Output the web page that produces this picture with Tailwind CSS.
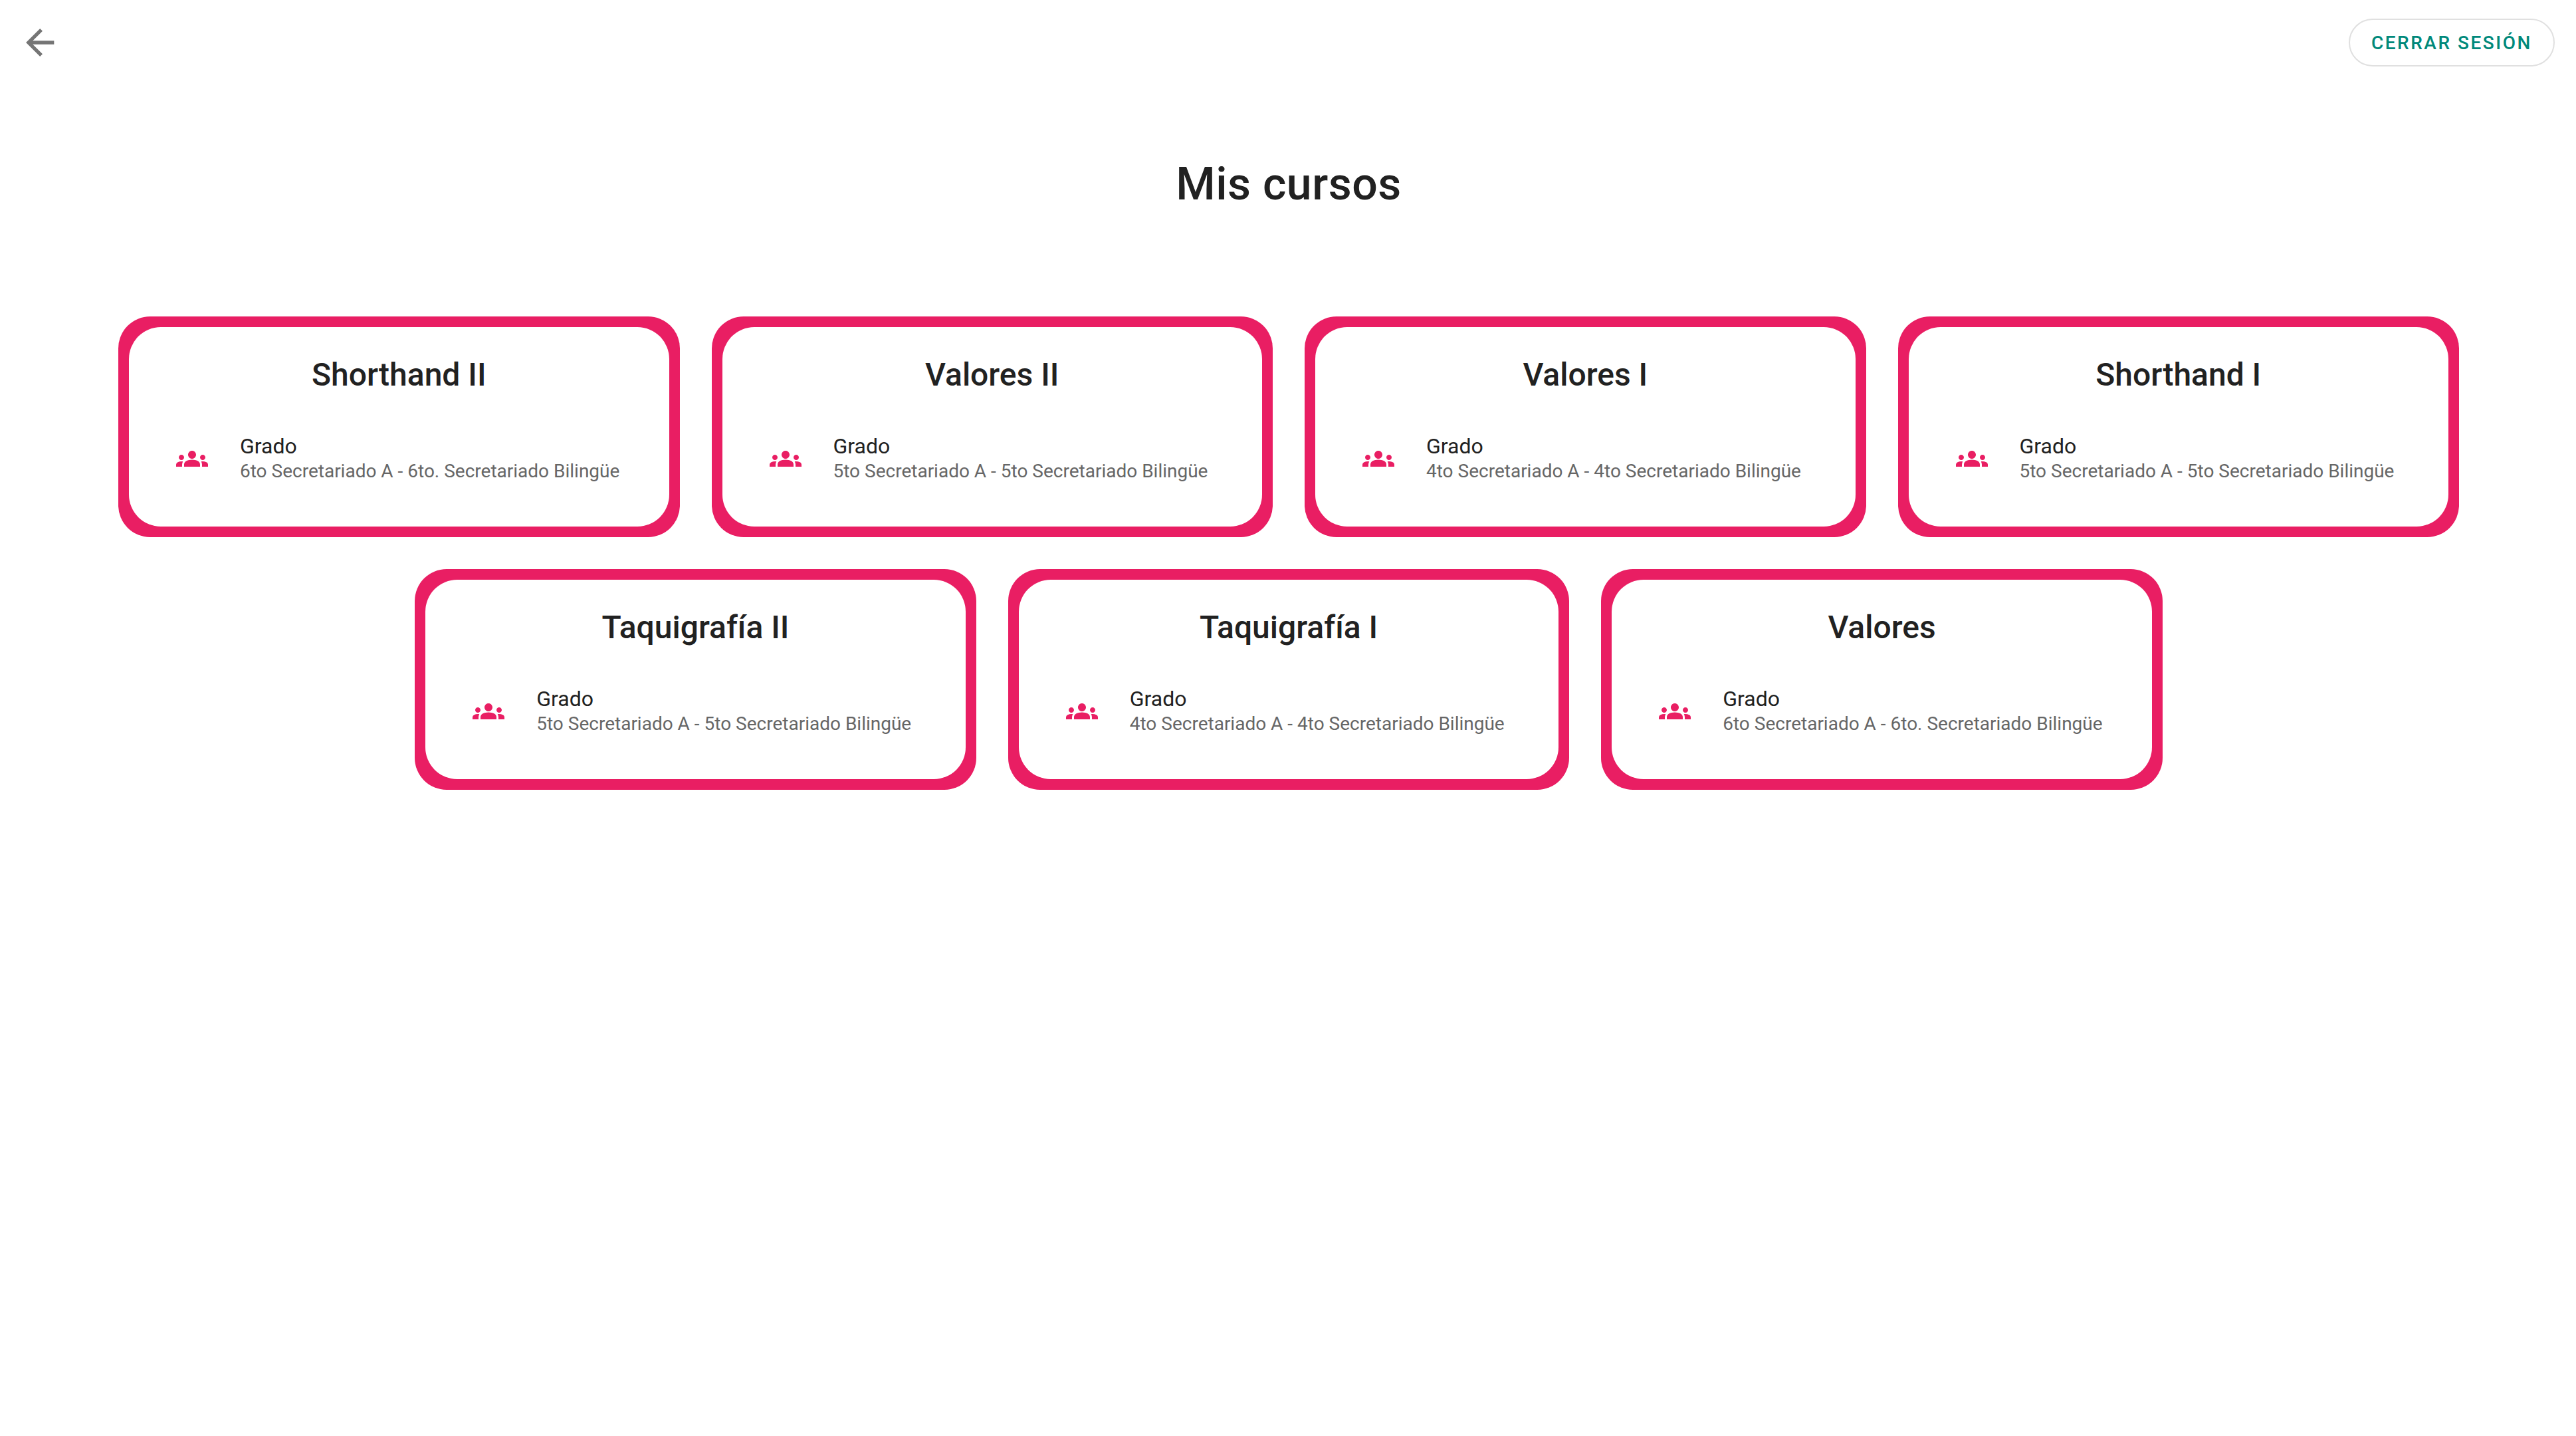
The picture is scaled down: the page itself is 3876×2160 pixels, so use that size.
<!DOCTYPE html>
<html lang="es">
<head>
<meta charset="utf-8">
<meta name="viewport" content="width=device-width, initial-scale=1">
<title>Mis cursos</title>
<script src="https://cdn.jsdelivr.net/npm/@tailwindcss/browser@4"></script>
</head>
<body class="min-h-screen bg-white font-['Roboto',sans-serif] text-[#212121]">
<svg class="hidden" aria-hidden="true">
  <symbol id="groups" viewBox="0 0 24 24">
    <path d="M12 12.75c1.63 0 3.07.39 4.24.9 1.08.48 1.76 1.56 1.76 2.73V18H6v-1.61c0-1.18.68-2.26 1.76-2.73 1.17-.52 2.61-.91 4.24-.91zM4 13c1.1 0 2-.9 2-2s-.9-2-2-2-2 .9-2 2 .9 2 2 2zm1.13 1.1c-.37-.06-.74-.1-1.13-.1-.99 0-1.93.21-2.78.58A2.01 2.01 0 0 0 0 16.43V18h4.500v-1.610c0-.83.23-1.610.63-2.290zM20 13c1.1 0 2-.9 2-2s-.9-2-2-2-2 .9-2 2 .9 2 2 2zm4 3.430c0-.81-.48-1.530-1.220-1.850A6.950 6.950 0 0 0 20 14c-.39 0-.76.04-1.130.1.4.68.63 1.460.63 2.290V18H24v-1.570zM12 6c1.660 0 3 1.340 3 3s-1.340 3-3 3-3-1.340-3-3 1.340-3 3-3z"/>
  </symbol>
</svg>

<header class="flex h-32 items-center justify-between pl-7 pr-8">
  <button type="button" aria-label="Volver" class="text-[#757575]">
    <svg class="size-16" viewBox="0 0 24 24" fill="currentColor"><path d="M20,11V13H8L13.5,18.5L12.08,19.92L4.16,12L12.08,4.08L13.5,5.5L8,11H20Z"/></svg>
  </button>
  <button type="button" class="h-[72px] rounded-full border-2 border-[#e0e0e0] px-8 pt-0.5 text-[28px] leading-8 font-medium tracking-[0.09em] text-[#00897b] uppercase">Cerrar sesión</button>
</header>

<main class="mx-auto max-w-[3600px] pt-[109px] pr-3.5 pl-4">
  <h1 class="text-center text-[68px] leading-[80px] font-medium tracking-[0.0073em]">Mis cursos</h1>

  <ul class="mt-[135px] flex flex-wrap justify-center">
    <li class="w-full p-6 md:w-1/2 xl:w-1/4">
      <a href="#" class="block rounded-[48px] bg-[#e91e63] p-4">
        <article class="rounded-[48px] bg-white pt-10 pb-16">
          <h2 class="text-center text-5xl leading-[64px] font-medium">Shorthand II</h2>
          <div class="mt-14 flex items-center gap-12 px-[71px]">
            <svg class="size-12 shrink-0 fill-[#e91e63]" aria-hidden="true"><use href="#groups"/></svg>
            <div>
              <p class="text-[32px] leading-[38px]">Grado</p>
              <p class="text-[28px] leading-[38px] text-[#666666]">6to Secretariado A - 6to. Secretariado Bilingüe</p>
            </div>
          </div>
        </article>
      </a>
    </li>
    <li class="w-full p-6 md:w-1/2 xl:w-1/4">
      <a href="#" class="block rounded-[48px] bg-[#e91e63] p-4">
        <article class="rounded-[48px] bg-white pt-10 pb-16">
          <h2 class="text-center text-5xl leading-[64px] font-medium">Valores II</h2>
          <div class="mt-14 flex items-center gap-12 px-[71px]">
            <svg class="size-12 shrink-0 fill-[#e91e63]" aria-hidden="true"><use href="#groups"/></svg>
            <div>
              <p class="text-[32px] leading-[38px]">Grado</p>
              <p class="text-[28px] leading-[38px] text-[#666666]">5to Secretariado A - 5to Secretariado Bilingüe</p>
            </div>
          </div>
        </article>
      </a>
    </li>
    <li class="w-full p-6 md:w-1/2 xl:w-1/4">
      <a href="#" class="block rounded-[48px] bg-[#e91e63] p-4">
        <article class="rounded-[48px] bg-white pt-10 pb-16">
          <h2 class="text-center text-5xl leading-[64px] font-medium">Valores I</h2>
          <div class="mt-14 flex items-center gap-12 px-[71px]">
            <svg class="size-12 shrink-0 fill-[#e91e63]" aria-hidden="true"><use href="#groups"/></svg>
            <div>
              <p class="text-[32px] leading-[38px]">Grado</p>
              <p class="text-[28px] leading-[38px] text-[#666666]">4to Secretariado A - 4to Secretariado Bilingüe</p>
            </div>
          </div>
        </article>
      </a>
    </li>
    <li class="w-full p-6 md:w-1/2 xl:w-1/4">
      <a href="#" class="block rounded-[48px] bg-[#e91e63] p-4">
        <article class="rounded-[48px] bg-white pt-10 pb-16">
          <h2 class="text-center text-5xl leading-[64px] font-medium">Shorthand I</h2>
          <div class="mt-14 flex items-center gap-12 px-[71px]">
            <svg class="size-12 shrink-0 fill-[#e91e63]" aria-hidden="true"><use href="#groups"/></svg>
            <div>
              <p class="text-[32px] leading-[38px]">Grado</p>
              <p class="text-[28px] leading-[38px] text-[#666666]">5to Secretariado A - 5to Secretariado Bilingüe</p>
            </div>
          </div>
        </article>
      </a>
    </li>
    <li class="w-full p-6 md:w-1/2 xl:w-1/4">
      <a href="#" class="block rounded-[48px] bg-[#e91e63] p-4">
        <article class="rounded-[48px] bg-white pt-10 pb-16">
          <h2 class="text-center text-5xl leading-[64px] font-medium">Taquigrafía II</h2>
          <div class="mt-14 flex items-center gap-12 px-[71px]">
            <svg class="size-12 shrink-0 fill-[#e91e63]" aria-hidden="true"><use href="#groups"/></svg>
            <div>
              <p class="text-[32px] leading-[38px]">Grado</p>
              <p class="text-[28px] leading-[38px] text-[#666666]">5to Secretariado A - 5to Secretariado Bilingüe</p>
            </div>
          </div>
        </article>
      </a>
    </li>
    <li class="w-full p-6 md:w-1/2 xl:w-1/4">
      <a href="#" class="block rounded-[48px] bg-[#e91e63] p-4">
        <article class="rounded-[48px] bg-white pt-10 pb-16">
          <h2 class="text-center text-5xl leading-[64px] font-medium">Taquigrafía I</h2>
          <div class="mt-14 flex items-center gap-12 px-[71px]">
            <svg class="size-12 shrink-0 fill-[#e91e63]" aria-hidden="true"><use href="#groups"/></svg>
            <div>
              <p class="text-[32px] leading-[38px]">Grado</p>
              <p class="text-[28px] leading-[38px] text-[#666666]">4to Secretariado A - 4to Secretariado Bilingüe</p>
            </div>
          </div>
        </article>
      </a>
    </li>
    <li class="w-full p-6 md:w-1/2 xl:w-1/4">
      <a href="#" class="block rounded-[48px] bg-[#e91e63] p-4">
        <article class="rounded-[48px] bg-white pt-10 pb-16">
          <h2 class="text-center text-5xl leading-[64px] font-medium">Valores</h2>
          <div class="mt-14 flex items-center gap-12 px-[71px]">
            <svg class="size-12 shrink-0 fill-[#e91e63]" aria-hidden="true"><use href="#groups"/></svg>
            <div>
              <p class="text-[32px] leading-[38px]">Grado</p>
              <p class="text-[28px] leading-[38px] text-[#666666]">6to Secretariado A - 6to. Secretariado Bilingüe</p>
            </div>
          </div>
        </article>
      </a>
    </li>
  </ul>
</main>
</body>
</html>
